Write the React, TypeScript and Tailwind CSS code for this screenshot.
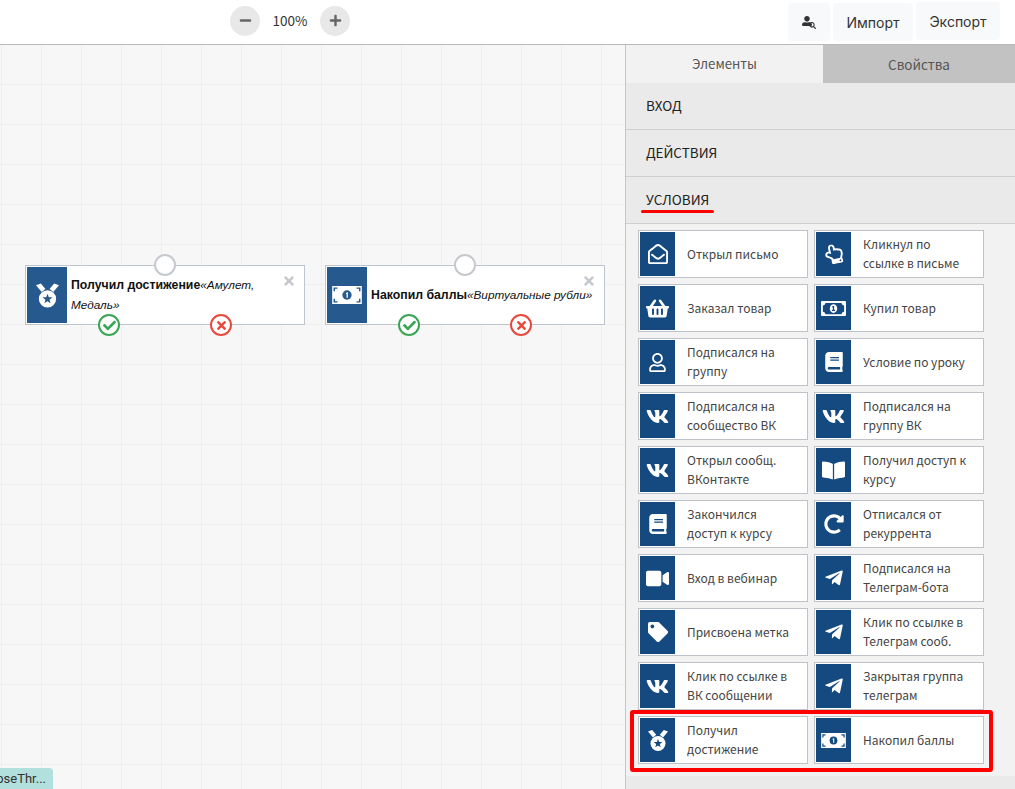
import React from "react";
import {
  FaRegEnvelopeOpen, FaRegHandPointUp, FaShoppingBasket, FaRegMoneyBillAlt, FaRegUser, FaBook, FaVk,
  FaBookOpen, FaRedoAlt, FaVideo, FaTelegramPlane, FaTag, FaTimes, FaCheck, FaMinus, FaPlus, FaUserAlt, FaSearch,
} from "react-icons/fa";

function Bill({ className = "" }: { className?: string }) {
  return (
    <svg viewBox="0 0 28 17" className={className} aria-hidden="true">
      <rect x="0" y="0" width="28" height="17" fill="#fff" />
      <path d="M2 5V2h3M23 2h3v3M26 12v3h-3M5 15H2v-3" fill="none" stroke="currentColor" strokeWidth="1.4" />
      <circle cx="14" cy="8.5" r="4.4" fill="currentColor" />
      <path d="M13 6.6l1.3-.6h.5v5h-1.2V7.5l-.6.2z" fill="#fff" />
    </svg>
  );
}

function Medal({ color, className = "" }: { color: string; className?: string }) {
  return (
    <svg viewBox="0 0 20 21" className={className} aria-hidden="true">
      <path d="M0 1.500L4.200 0L8.200 4.800L5 7.500z" fill="#fff" />
      <path d="M20 1.500L15.800 0L11.800 4.800L15 7.500z" fill="#fff" />
      <circle cx="10" cy="13.500" r="7.500" fill="#fff" />
      <path d="M10 8.900L11.120 11.960L14.370 12.080L11.810 14.090L12.700 17.220L10 15.400L7.300 17.220L8.190 14.090L5.630 12.080L8.880 11.960z" fill={color} />
    </svg>
  );
}

type Item = { lines: string[]; icon: React.ReactNode };
const cls = "text-white";
const vk = <FaVk className={`${cls} text-[23px]`} />;
const tg = <FaTelegramPlane className={`${cls} text-[20px]`} />;
const bill = <span className="text-[#154a80]"><Bill className="w-[25px] h-[15px]" /></span>;

const items: Item[] = [
  { lines: ["Открыл письмо"], icon: <FaRegEnvelopeOpen className={`${cls} text-[20px]`} /> },
  { lines: ["Кликнул по", "ссылке в письме"], icon: <FaRegHandPointUp className={`${cls} text-[20px] -rotate-12`} /> },
  { lines: ["Заказал товар"], icon: <FaShoppingBasket className={`${cls} text-[23px]`} /> },
  { lines: ["Купил товар"], icon: <FaRegMoneyBillAlt className={`${cls} text-[25px]`} /> },
  { lines: ["Подписался на", "группу"], icon: <FaRegUser className={`${cls} text-[19px]`} /> },
  { lines: ["Условие по уроку"], icon: <FaBook className={`${cls} text-[20px]`} /> },
  { lines: ["Подписался на", "сообщество ВК"], icon: vk },
  { lines: ["Подписался на", "группу ВК"], icon: vk },
  { lines: ["Открыл сообщ.", "ВКонтакте"], icon: vk },
  { lines: ["Получил доступ к", "курсу"], icon: <FaBookOpen className={`${cls} text-[23px]`} /> },
  { lines: ["Закончился", "доступ к курсу"], icon: <FaBook className={`${cls} text-[20px]`} /> },
  { lines: ["Отписался от", "рекуррента"], icon: <FaRedoAlt className={`${cls} text-[20px]`} /> },
  { lines: ["Вход в вебинар"], icon: <FaVideo className={`${cls} text-[23px]`} /> },
  { lines: ["Подписался на", "Телеграм-бота"], icon: tg },
  { lines: ["Присвоена метка"], icon: <FaTag className={`${cls} text-[20px]`} /> },
  { lines: ["Клик по ссылке в", "Телеграм сооб."], icon: tg },
  { lines: ["Клик по ссылке в", "ВК сообщении"], icon: vk },
  { lines: ["Закрытая группа", "телеграм"], icon: tg },
  { lines: ["Получил", "достижение"], icon: <Medal color="#154a80" className="w-5 h-[21px]" /> },
  { lines: ["Накопил баллы"], icon: bill },
];

function Card({ item }: { item: Item }) {
  return (
    <div className="h-12 bg-white border-[1.5px] border-[#bfc3c7] p-px flex items-center">
      <div className="w-[35px] h-full shrink-0 bg-[#154a80] flex items-center justify-center">{item.icon}</div>
      <div className="pl-3 -mt-[2px] text-[12px] leading-[19px] text-[#444]">
        {item.lines.map((l) => (
          <div key={l} className="whitespace-nowrap">{l}</div>
        ))}
      </div>
    </div>
  );
}

function Node({ left, icon, title, sub, textClass }: { left: string; icon: React.ReactNode; title: string; sub: string; textClass: string }) {
  return (
    <div className={`absolute top-[220px] ${left} w-[280px] h-[60px] bg-white border border-[#bfc5cc] p-px flex font-['Liberation_Sans',sans-serif]`}>
      <div className="w-10 shrink-0 bg-[#265a8e] flex items-center justify-center">{icon}</div>
      <div className={`pl-1 text-[12px] leading-[19px] text-[#111] self-center ${textClass}`}>
        <b className="text-[12.300px]">{title}</b><i className="text-[11.750px] whitespace-normal">{sub}</i>
      </div>
      <FaTimes className="absolute right-[8px] top-[8px] text-[#c5c9ce] text-[14px]" />
      <div className="absolute left-[128px] -top-[12px] w-[22px] h-[22px] rounded-full bg-white border-2 border-[#c5c9ce]" />
      <div className="absolute left-[72px] top-[48px] w-[22px] h-[22px] rounded-full bg-white border-2 border-[#3aa655] flex items-center justify-center">
        <FaCheck className="text-[#3aa655] text-[13px]" />
      </div>
      <div className="absolute left-[184px] top-[48px] w-[22px] h-[22px] rounded-full bg-white border-2 border-[#e8493c] flex items-center justify-center">
        <FaTimes className="text-[#e8493c] text-[13px]" />
      </div>
    </div>
  );
}

function Head({ children, top }: { children: string; top?: boolean }) {
  return (
    <div className="h-[47px] border-b border-[#cfcfcf] bg-[#eaeaea] pl-5 pb-[2px] flex items-center text-[13.500px] text-[#222] relative">
      {children}
      {top && <div className="absolute left-[15px] top-[33px] w-[73px] h-[3px] rounded-full bg-[#f00]" />}
    </div>
  );
}

export default function App() {
  return (
    <div className="w-[1015px] h-[789px] overflow-hidden flex flex-col bg-white font-['Noto_Sans_CJK_SC','Noto_Sans',sans-serif] relative">
      <header className="h-[45px] shrink-0 border-b border-[#b9b9b9] flex items-center pl-[230px] pr-[15px]">
        <button className="w-[30px] h-[30px] -mt-[3px] rounded-full bg-[#e8e8e8] flex items-center justify-center">
          <FaMinus className="text-[#666] text-[13px]" />
        </button>
        <span className="w-[60px] -mt-[3px] text-center text-[13.500px] text-[#333]">100%</span>
        <button className="w-[30px] h-[30px] -mt-[3px] rounded-full bg-[#e8e8e8] flex items-center justify-center">
          <FaPlus className="text-[#666] text-[13px]" />
        </button>
        <div className="ml-auto flex items-center gap-[3px] font-['Inter',sans-serif] text-[14px] text-[#333]">
          <button className="relative w-[42px] h-[38px] rounded bg-[#f8f9fa] flex items-center justify-center">
            <FaUserAlt className="text-[#333] text-[10px] -mt-[3px] -ml-[5px]" />
            <FaSearch className="absolute left-[21px] top-[19px] text-[#333] text-[7px]" />
          </button>
          <button className="w-20 h-[38px] rounded bg-[#f8f9fa]">Импорт</button>
          <button className="w-[84px] h-[38px] -mt-[2px] rounded bg-[#f8f9fa]">Экспорт</button>
        </div>
      </header>

      <div className="flex-1 flex min-h-0">
        <main className="w-[625px] relative overflow-hidden bg-[#f7f7f7] bg-[linear-gradient(#efefef_1px,transparent_1px),linear-gradient(90deg,#efefef_1px,transparent_1px)] bg-[size:40px_40px] bg-[position:1px_-1px]">
          <Node
            left="left-[25px]"
            icon={<Medal color="#265a8e" className="w-[23px] h-[25px]" />}
            title="Получил достижение"
            sub="«Амулет, Медаль»"
            textClass="w-[210px]"
          />
          <Node
            left="left-[325px]"
            icon={<span className="text-[#265a8e]"><Bill className="w-[30px] h-[18px]" /></span>}
            title="Накопил баллы"
            sub="«Виртуальные рубли»"
            textClass="whitespace-nowrap"
          />
          <div className="absolute left-0 bottom-0 w-[53px] h-[21px] rounded-tr bg-[#b2e0dc] overflow-hidden font-['Roboto',sans-serif] text-[13px] leading-[21px] text-[#333] whitespace-nowrap pr-[7px] flex justify-end">
            pseThr...
          </div>
        </main>

        <aside className="w-[390px] border-l border-[#c6c6c6] bg-[#eaeaea] flex flex-col">
          <div className="flex h-[38px] text-[#555]">
            <div className="w-[197px] bg-[#f2f2f2] flex items-center justify-center text-[13.200px]">Элементы</div>
            <div className="flex-1 bg-[#c2c2c2] flex items-center justify-center text-[13.500px]">Свойства</div>
          </div>
          <Head>ВХОД</Head>
          <Head>ДЕЙСТВИЯ</Head>
          <Head top>УСЛОВИЯ</Head>
          <div className="bg-[#f2f2f2] pt-[6px] pb-3 pl-3 grid grid-cols-[170px_170px] gap-[6px]">
            {items.map((it) => (
              <Card key={it.lines.join()} item={it} />
            ))}
          </div>
        </aside>
      </div>

      <div className="absolute left-[630px] top-[710px] w-[363px] h-[62px] border-4 border-[#f00] rounded-[3px]" />
    </div>
  );
}
